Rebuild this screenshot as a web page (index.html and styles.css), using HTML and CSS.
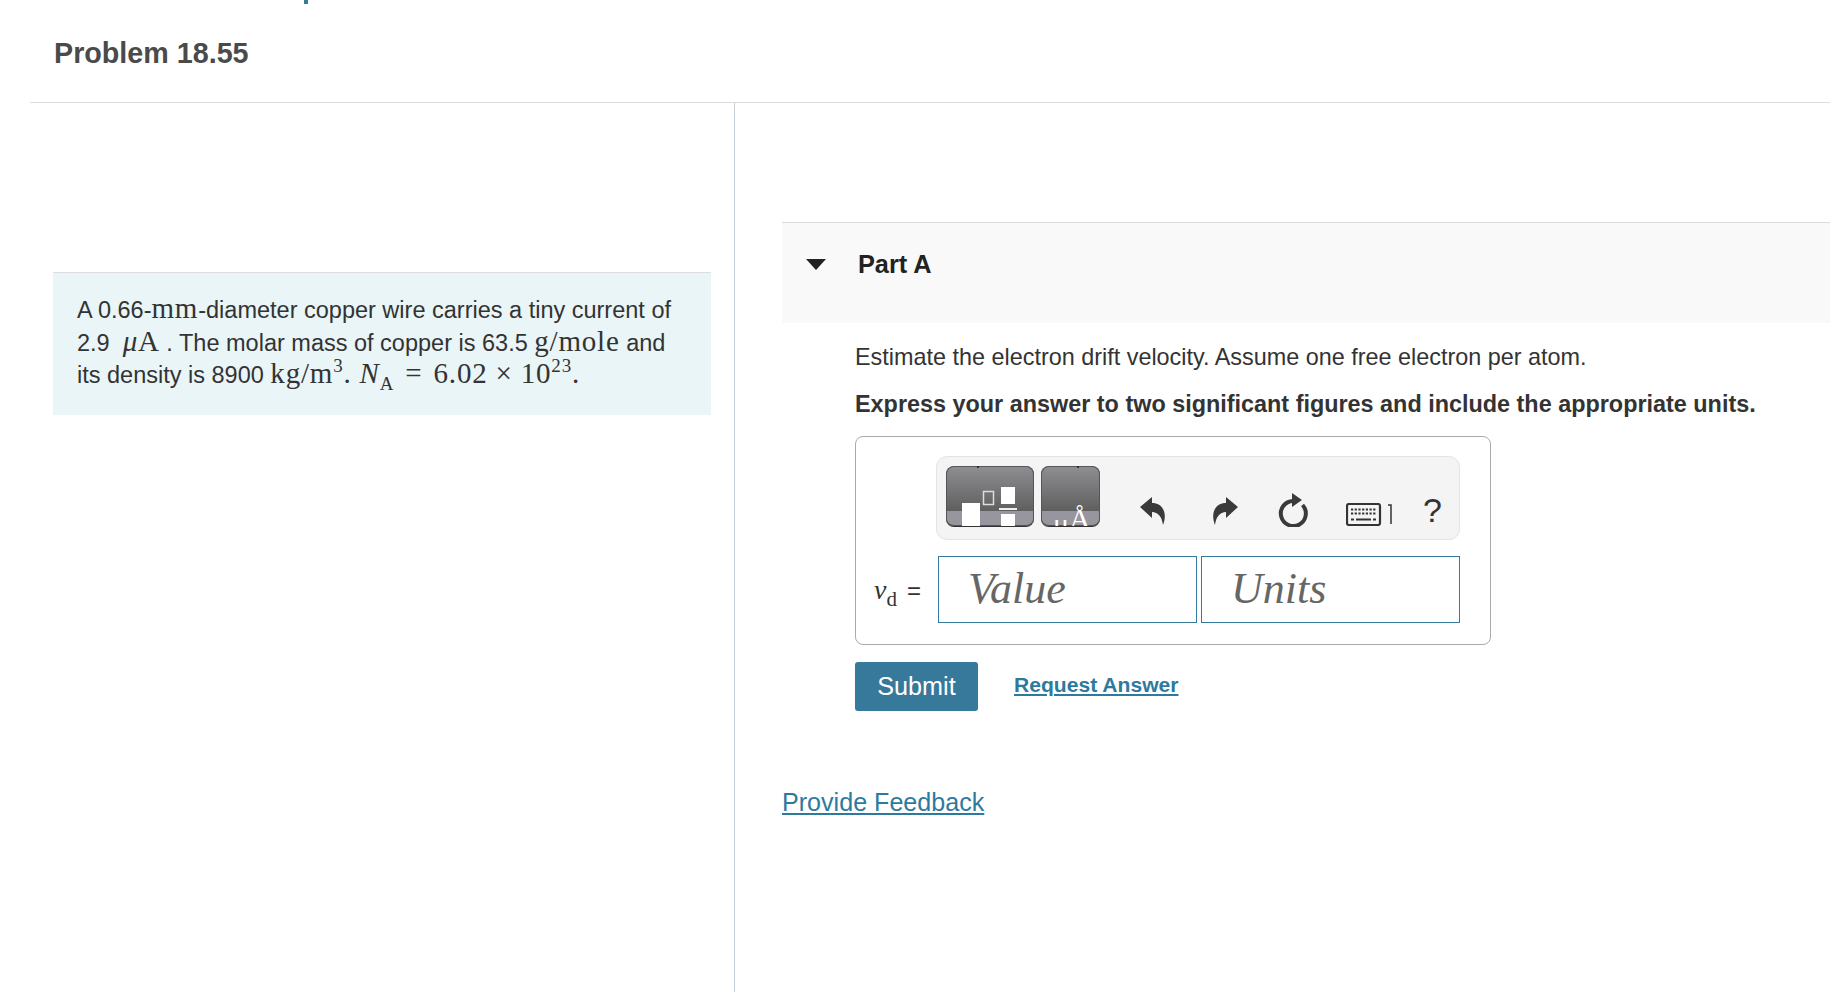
FILE: index.html
```html
<!DOCTYPE html>
<html lang="en">
<head>
  <meta charset="UTF-8" />
  <title>Problem 18.55</title>
  <link rel="stylesheet" href="styles.css">
</head>
<body>

  <div class="top-tick"></div>

  <h1 class="title">Problem 18.55</h1>

  <div class="columns">
    <div class="left">
      <div class="callout">
        A 0.66-<span class="math">mm</span>-diameter copper wire carries a tiny current of
        2.9 &nbsp;<span class="math"><i>μ</i>A</span> . The molar mass of copper is 63.5 <span class="math">g/mole</span> and
        its density is 8900 <span class="math">kg/m<sup>3</sup>. <i>N</i><sub>A</sub> <span class="rel">=</span> 6.02 × 10<sup>23</sup>.</span>
      </div>
    </div>

    <div class="right">
      <div class="part-head">
        <span class="caret"></span>
        <span class="part-name">Part A</span>
      </div>

      <div class="part-body">
        <p class="question">Estimate the electron drift velocity. Assume one free electron per atom.</p>
        <p class="instruction">Express your answer to two significant figures and include the appropriate units.</p>

        <div class="answer-box">
          <div class="toolbar">
            <div class="tpl-btn tpl-wide">
              <svg width="88" height="61" viewBox="0 0 88 61">
                <rect x="31" y="0" width="2" height="2" fill="#333"/>
                <rect x="16" y="37" width="18" height="24" fill="#fff"/>
                <rect x="37.500" y="25.500" width="10" height="13" fill="none" stroke="#ddd" stroke-width="1.500"/>
                <rect x="55" y="21" width="14" height="17" fill="#fff"/>
                <rect x="53" y="42" width="18" height="2" fill="#eee"/>
                <rect x="55" y="48" width="14" height="13" fill="#fff"/>
              </svg>
            </div>
            <div class="tpl-btn tpl-narrow">
              <svg width="58" height="61" viewBox="0 0 58 61">
                <rect x="36" y="0" width="2" height="2" fill="#333"/>
                <text class="unit-glyph" x="12" y="68">μ</text>
                <text class="unit-glyph" x="28" y="63">Å</text>
              </svg>
            </div>
            <svg class="tool tool-undo" width="26" height="28" viewBox="0 0 26 28">
              <path d="M0 10 L12 0 V6 C22 6 28 15 23 28 C22 20 18 15 12 15 V21 Z" fill="#3a3a3a"/>
            </svg>
            <svg class="tool tool-redo" width="26" height="28" viewBox="0 0 26 28">
              <path transform="translate(26 0) scale(-1 1)" d="M0 10 L12 0 V6 C22 6 28 15 23 28 C22 20 18 15 12 15 V21 Z" fill="#3a3a3a"/>
            </svg>
            <svg class="tool tool-reload" width="30" height="34" viewBox="0 0 30 34">
              <path d="M15 8 A12.500 12.500 0 1 0 24.500 12" fill="none" stroke="#3a3a3a" stroke-width="4"/>
              <path d="M14 0 L24 7 L14 14 Z" fill="#3a3a3a"/>
            </svg>
            <svg class="tool tool-keys" width="46" height="23" viewBox="0 0 46 23">
              <rect x="1" y="1" width="33" height="21" rx="2" fill="none" stroke="#333" stroke-width="2.200"/>
              <path d="M5 6.500h25M5 10.500h25" stroke="#333" stroke-width="2" stroke-dasharray="2.200 1.500"/>
              <path d="M5 16.500h3M10 16.500h15M27 16.500h3" stroke="#333" stroke-width="2"/>
              <path d="M42 2h3v19" fill="none" stroke="#333" stroke-width="1.500"/>
            </svg>
            <span class="tool-help">?</span>
          </div>

          <div class="answer-row">
            <span class="answer-label"><i>v</i><sub>d</sub> <span class="equals">=</span></span>
            <div class="answer-input">Value</div>
            <div class="answer-input">Units</div>
          </div>
        </div>

        <div class="actions">
          <a class="btn-submit" href="#">Submit</a>
          <a class="link-answer" href="#">Request Answer</a>
        </div>
      </div>

      <a class="link-feedback" href="#">Provide Feedback</a>
    </div>
  </div>

</body>
</html>
```

FILE: styles.css
```css
html, body {
  height: 100%;
}

body {
  margin: 0;
  overflow: hidden;
  display: flex;
  flex-direction: column;
  font-family: 'Liberation Sans', Arial, sans-serif;
  color: #333;
  background: #fff;
}

.top-tick {
  width: 4px;
  height: 4px;
  margin-left: 304px;
  background: #37799b;
}

.title {
  margin: 0 0 0 30px;
  height: 99px;
  padding: 33px 0 0 24px;
  box-sizing: border-box;
  border-bottom: 1px solid #ddd;
  font-size: 28.700px;
  line-height: 32px;
  font-weight: bold;
  color: #4a4a4a;
}

.columns {
  flex: 1;
  display: flex;
  margin-left: 30px;
}

.left {
  width: 705px;
  flex: none;
  box-sizing: border-box;
  border-right: 1px solid #c5cfd8;
  padding: 169px 0 0 23px;
}

.callout {
  width: 658px;
  height: 143px;
  box-sizing: border-box;
  padding: 21px 24px;
  background: #e9f5f7;
  border-top: 1px solid #ddd;
  font-size: 23.500px;
  line-height: 32.500px;
}

.math {
  font-family: 'Liberation Serif', 'Times New Roman', serif;
  font-size: 29px;
  line-height: 0;
  letter-spacing: 0.800px;
}

.math sup, .math sub {
  font-size: 19px;
  line-height: 0;
}

.rel {
  margin: 0 3px;
}

.right {
  flex: 1;
  padding: 119px 0 0 47px;
}

.part-head {
  height: 101px;
  box-sizing: border-box;
  display: flex;
  align-items: flex-start;
  padding: 26px 0 0 24px;
  background: #f9f9f9;
  border-top: 1px solid #ddd;
}

.caret {
  margin-top: 10px;
  border-left: 10px solid transparent;
  border-right: 10px solid transparent;
  border-top: 11px solid #222;
}

.part-name {
  margin-left: 32px;
  font-size: 25.300px;
  line-height: 30px;
  font-weight: bold;
  color: #222;
}

.part-body {
  padding-left: 73px;
}

.question {
  margin: 20px 0 0;
  font-size: 23.400px;
  line-height: 28px;
}

.instruction {
  margin: 19px 0 0;
  font-size: 23.400px;
  line-height: 28px;
  font-weight: bold;
}

.answer-box {
  width: 636px;
  height: 209px;
  box-sizing: border-box;
  margin-top: 18px;
  padding: 19px 0 0 80px;
  border: 1px solid #aaa;
  border-radius: 8px;
}

.toolbar {
  width: 524px;
  height: 84px;
  box-sizing: border-box;
  display: flex;
  align-items: flex-start;
  padding: 9px 0 0 9px;
  background: #f4f4f4;
  border: 1px solid #e3e3e3;
  border-radius: 11px;
}

.tpl-btn {
  height: 61px;
  box-sizing: border-box;
  overflow: hidden;
  border-radius: 8px;
  box-shadow: inset 0 0 0 1px #555;
  border-bottom: 1px solid #333;
  background: linear-gradient(#8f8e93, #5f5f5f 75%, #97959d 75%);
}

.tpl-btn svg {
  display: block;
}

.tpl-wide {
  width: 88px;
}

.tpl-narrow {
  width: 59px;
  margin-left: 7px;
}

.unit-glyph {
  font-family: 'Liberation Serif', serif;
  font-size: 30px;
  fill: #fff;
}

.tool {
  flex: none;
}

.tool-undo {
  margin: 31px 0 0 40px;
}

.tool-redo {
  margin: 31px 0 0 46px;
}

.tool-reload {
  margin: 27px 0 0 40px;
}

.tool-keys {
  margin: 37px 0 0 38px;
}

.tool-help {
  margin: 25px 0 0 -3px;
  padding-left: 34px;
  font-size: 34px;
  line-height: 38px;
}

.answer-row {
  display: flex;
  align-items: center;
  margin-top: 16px;
  margin-left: -62px;
}

.answer-label {
  width: 64px;
  font-family: 'Liberation Serif', serif;
  font-size: 28px;
}

.answer-label sub {
  font-size: 21px;
  line-height: 0;
}

.equals {
  margin-left: 3px;
  font-family: 'Liberation Sans', sans-serif;
  font-size: 24px;
}

.answer-input {
  width: 259px;
  height: 67px;
  box-sizing: border-box;
  margin-right: 4px;
  padding-left: 29px;
  border: 1px solid #337a9d;
  font-family: 'Liberation Serif', serif;
  font-style: italic;
  font-size: 44px;
  line-height: 63px;
  color: #666;
}

.actions {
  display: flex;
  align-items: flex-start;
  margin-top: 17px;
}

.btn-submit {
  width: 123px;
  height: 49px;
  border-radius: 3px;
  background: #37799b;
  color: #fff;
  font-size: 25.200px;
  line-height: 49px;
  text-align: center;
  text-decoration: none;
}

.link-answer {
  margin: 10px 0 0 36px;
  font-size: 21.100px;
  line-height: 26px;
  font-weight: bold;
  color: #2e7a9e;
}

.link-feedback {
  display: inline-block;
  margin-top: 76px;
  font-size: 25.100px;
  line-height: 30px;
  color: #2e7a9e;
}
```
